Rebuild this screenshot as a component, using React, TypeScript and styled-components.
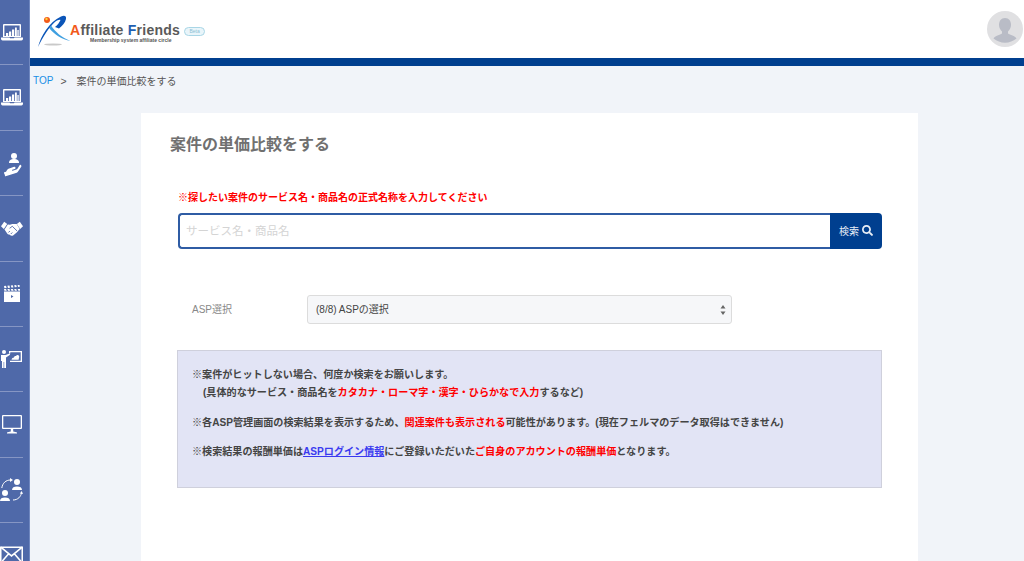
import styled, { createGlobalStyle } from 'styled-components';
import { FaHandHolding, FaSearch } from 'react-icons/fa';

const GlobalStyle = createGlobalStyle`
  html, body {
    margin: 0;
    height: 100%;
    overflow: hidden;
    background: #f1f4f9;
    font-family: "Liberation Sans", "Noto Sans CJK JP", sans-serif;
  }
`;

const Page = styled.div`
  display: flex;
  width: 1024px;
  height: 561px;
  overflow: hidden;
`;

const Sidebar = styled.nav`
  flex: 0 0 30px;
  box-sizing: border-box;
  height: 561px;
  overflow: hidden;
  background: #4f69a9;
  border-right: 1px solid #7088c0;
`;

const SideItem = styled.div`
  box-sizing: border-box;
  width: 23px;
  height: 65.4px;
  display: flex;
  align-items: center;
  justify-content: center;
  color: #fff;
  border-bottom: 1px solid #8696c4;
`;

const HandWrap = styled.div`
  position: relative;
  width: 20px;
  height: 20px;

  > svg:first-child {
    position: absolute;
    left: 0;
    bottom: -2px;
    transform: rotate(-18deg);
  }

  > svg:last-child {
    position: absolute;
    left: 6px;
    top: 0;
  }
`;

const Main = styled.div`
  flex: 1;
  display: flex;
  flex-direction: column;
  min-width: 0;
`;

const Header = styled.header`
  height: 58px;
  flex: 0 0 58px;
  box-sizing: border-box;
  padding: 0 1px 0 8px;
  background: #fff;
  display: flex;
  align-items: center;
  justify-content: space-between;
`;

const Logo = styled.div`
  display: flex;
  align-items: center;
  padding-top: 5px;
`;

const LogoText = styled.div`
  display: flex;
  flex-direction: column;
  margin-left: -1px;
  padding-top: 2px;
`;

const LogoName = styled.div`
  font-size: 14px;
  line-height: 15px;
  font-weight: 700;
  color: #5a5a5a;
  letter-spacing: 0.25px;
  white-space: nowrap;
`;

const LogoLetter = styled.span<{ $color: string }>`
  color: ${p => p.$color};
`;

const LogoTag = styled.div`
  font-size: 5px;
  line-height: 5px;
  font-weight: 700;
  color: #555;
  margin-left: 20px;
  white-space: nowrap;
`;

const BetaPill = styled.div`
  width: 19px;
  height: 7px;
  margin: 0 0 0 4px;
  border: 1px solid #a9d6e6;
  border-radius: 5px;
  background: #e9f5fa;
  color: #8dbfd4;
  font-size: 5px;
  line-height: 7px;
  text-align: center;
`;

const Bar = styled.div`
  flex: 0 0 8px;
  background: #003f8f;
`;

const Breadcrumb = styled.div`
  flex: 0 0 47px;
  box-sizing: border-box;
  padding: 7px 0 0 3px;
  display: flex;
  align-items: flex-start;
  font-size: 10px;
  line-height: 16px;
  color: #555;
`;

const CrumbLink = styled.a`
  color: #1a8fe6;
  font-size: 10px;
  margin-right: 7px;
`;

const CrumbSep = styled.span`
  margin-right: 10px;
  font-size: 10.5px;
`;

const CrumbText = styled.span`
  line-height: 15px;
  padding-top: 1px;
`;

const Card = styled.section`
  flex: 1;
  box-sizing: border-box;
  width: 777px;
  margin-left: 111px;
  padding: 22px 36px 0 29px;
  background: #fff;
`;

const Title = styled.h1`
  margin: 0;
  font-size: 16px;
  line-height: 20px;
  font-weight: 700;
  color: #707070;
`;

const Warning = styled.p`
  margin: 36px 0 0 8px;
  font-size: 10px;
  line-height: 14px;
  font-weight: 700;
  color: #f00;
`;

const SearchRow = styled.div`
  display: flex;
  height: 36px;
  margin: 8px 0 0 8px;
`;

const SearchInput = styled.input`
  flex: 1;
  min-width: 0;
  box-sizing: border-box;
  padding: 0 6px;
  border: 2px solid #2f5ca4;
  border-right: 0;
  border-radius: 4px 0 0 4px;
  outline: none;
  background: #fff;
  font-family: inherit;
  font-size: 11.5px;

  &::placeholder {
    color: #d4d4d4;
  }
`;

const SearchButton = styled.button`
  flex: 0 0 52px;
  padding: 0 0 2px;
  border: 0;
  border-radius: 0 4px 4px 0;
  background: #003f8f;
  color: #e8eef6;
  font-family: inherit;
  font-size: 10px;
  display: flex;
  align-items: center;
  justify-content: center;
  gap: 3px;
`;

const AspRow = styled.div`
  display: flex;
  align-items: center;
  height: 29px;
  margin: 46px 0 0 22px;
`;

const AspLabel = styled.label`
  flex: 0 0 115px;
  padding-bottom: 3px;
  font-size: 10px;
  color: #888;
`;

const SelectBox = styled.div`
  position: relative;
  box-sizing: border-box;
  width: 425px;
  height: 29px;
  padding: 0 8px 3px;
  display: flex;
  align-items: center;
  border: 1px solid #dcdcdc;
  border-radius: 3px;
  background: #f6f7f9;
  font-size: 10px;
  color: #444;
`;

const Arrows = styled.svg`
  position: absolute;
  right: 5px;
  top: 8px;
`;

const Notice = styled.div`
  box-sizing: border-box;
  height: 138px;
  margin: 26px 0 0 7px;
  padding: 15px 14px 0;
  border: 1px solid #cfd0dc;
  background: #e2e4f5;
  font-size: 10.1px;
  line-height: 18px;
  font-weight: 700;
  color: #444;
`;

const NoticePara = styled.p`
  margin: 0 0 11.5px;
`;

const Indent = styled.span`
  display: block;
  padding-left: 11px;
`;

const Red = styled.span`
  color: #f00;
`;

const NoticeLink = styled.a`
  color: #3a3af0;
  text-decoration: underline;
`;

const LaptopIcon = () => (
  <svg width="22" height="17" viewBox="0 0 22 17" fill="currentColor">
    <path d="M3 0h16a1 1 0 0 1 1 1v12H2V1a1 1 0 0 1 1-1zm.4 1.500V12h15.200V1.500z" fillRule="evenodd" />
    <path d="M0 13.600h8.500l.6.700h3.800l.6-.7H22v1.200a1.600 1.600 0 0 1-1.600 1.600H1.600A1.600 1.600 0 0 1 0 14.800z" />
    <path d="M5 9h2.200v3H5zM8 7.500h2.200V12H8zM11 5.500h2.200V12H11zM14 3.500h1.800V12H14zM16.400 6h1.300v6h-1.300z" />
  </svg>
);

const HandPersonIcon = () => (
  <HandWrap>
    <FaHandHolding size={19} />
    <svg width="12" height="10" viewBox="0 0 12 10" fill="currentColor">
      <circle cx="6" cy="3" r="3" />
      <path d="M1 10c0-3 2-4 5-4s5 1 5 4z" />
    </svg>
  </HandWrap>
);

const HandshakeIcon = () => (
  <svg width="22" height="15" viewBox="0 0 22 15" fill="currentColor">
    <path d="M0 5.200 3.200.8l3 2.200-3.400 5z" />
    <path d="M22 5.200 18.800.8l-3 2.200 3.400 5z" />
    <path d="M3.500 8.500 6.800 3.500c1.500.3 3 .1 4.400-.4l4.500-.2 3 5-3 3.500-3.600 3c-1.500.8-2.600.3-3.200-.6-1.500 0-2.700-.8-3.200-2z" />
    <path d="M8.600 7.200c1-.4 1.800-1.200 2.600-2l4.800 4.700M7.400 11.500l1.500-1.500M9.800 13l1.500-1.500" fill="none" stroke="#4f69a9" strokeWidth="0.9" />
  </svg>
);

const ClapperIcon = () => (
  <svg width="16" height="17" viewBox="0 0 16 17" fill="currentColor">
    <path d="M0 1 2 .8 2.600 3 .4 3.300zM3.400.7l2-.2.600 2.200-2 .2zM6.800.4l2-.2.600 2.200-2 .2zM10.200.2l2-.2.600 2.100-2 .2zM13.600 0 15.500 0l.3 1.800-1.800.2z" />
    <path d="M0 4h2l.8 1.800H.4zM3.400 4h2l.8 1.800H4zM6.800 4h2l.8 1.800H7.400zM10.200 4h2l.8 1.800h-2.200zM13.600 4H16v1.800h-1.600z" />
    <path d="M0 6.500h16V17H0zm7 3.500v3l2.500-1.500z" fillRule="evenodd" />
  </svg>
);

const PresenterIcon = () => (
  <svg width="21" height="18" viewBox="0 0 21 18" fill="currentColor">
    <circle cx="3" cy="2" r="2" />
    <path d="M0 5h4.600l4-1.500.5 1.200L5 7.400V18H3.200v-6h-.6v6H1V11H0z" />
    <path d="M8 1h13v11H9V10.700h10.700V2.300H9.300V3.500H8z" />
    <path d="M10.500 9.800c.4-1.600 1.400-2.400 2.500-2.400.2-1.200 1.200-1.800 2-1.300.5-1 1.800-1.300 2.600-.6.800.6.800 1.800.2 2.500.3 1 0 1.800-1 1.800z" />
  </svg>
);

const MonitorIcon = () => (
  <svg width="20" height="19" viewBox="0 0 20 19" fill="currentColor">
    <path d="M1 0h18a1 1 0 0 1 1 1v12a1 1 0 0 1-1 1H1a1 1 0 0 1-1-1V1a1 1 0 0 1 1-1zm.3 1.300v11.400h17.400V1.300z" fillRule="evenodd" />
    <path d="M8.800 14h2.400v2.400c1.500.3 3 .5 3.800 1.200v.8H5v-.8c.8-.7 2.300-.9 3.800-1.200z" />
  </svg>
);

const CycleIcon = () => (
  <svg width="23" height="23" viewBox="0 0 23 23" fill="currentColor">
    <circle cx="17" cy="4" r="3" />
    <path d="M12 12c0-2.500 2-3.500 5-3.500s5 1 5 3.500z" />
    <circle cx="5" cy="15" r="3" />
    <path d="M0 23c0-2.500 2-3.500 5-3.500s5 1 5 3.500z" />
    <path d="M1.800 10C2.500 5 6 2 10.500 2" fill="none" stroke="currentColor" strokeWidth="1" />
    <path d="M10 0l3 2-3 2z" />
    <path d="M21.500 15c-.7 3.500-3.500 7-8.500 7" fill="none" stroke="currentColor" strokeWidth="1" />
    <path d="M19.800 15.500l1.900-2.500 1.300 3z" />
  </svg>
);

const MailIcon = () => (
  <svg width="24" height="18" viewBox="0 0 24 18" fill="none" stroke="currentColor" strokeWidth="1.6">
    <path d="M.8.800h22.400v16.400H.800z" />
    <path d="M.8.800 12 10 23.200.800M.8 17.200l8-9.200M23.200 17.200l-8-9.200" />
  </svg>
);

const LogoMark = () => (
  <svg width="33" height="33" viewBox="0 0 33 33">
    <ellipse cx="15" cy="29.500" rx="9" ry="0.9" fill="#c9c9c9" />
    <path d="M0 32C3 21 11 7 23 1.500c3.500-1.500 5.500-.5 5 2.500-.7 3.800-4 7-7 9.500l-4-1.500c2.500-2 4.500-4.500 5.500-7-1-.8-3 0-5 1.500C11 12 5 22 0 32z" fill="#0b55b8" />
    <path d="M13 10.500c4.500 6.500 10.500 12 19.500 15.500-8.500-1.500-16-6.500-21-12.500z" fill="#3f9fe0" />
    <circle cx="9" cy="5" r="3" fill="#f2591a" />
    <circle cx="8.500" cy="4" r="1.200" fill="#ffd23a" />
  </svg>
);

const AvatarIcon = () => (
  <svg width="36" height="36" viewBox="0 0 36 36">
    <circle cx="18" cy="18" r="18" fill="#e0e0e2" />
    <path d="M18 7c4 0 6 3 6 7 0 3-1.500 5-3 6.500v2c2 1.500 7 2 8.500 5A18 18 0 0 1 6.500 27.500c1.500-3 6.500-3.500 8.500-5v-2C13.500 19 12 17 12 14c0-4 2-7 6-7z" fill="#b9bcc6" />
  </svg>
);

const sideIcons = [
  <LaptopIcon key="a" />,
  <LaptopIcon key="b" />,
  <HandPersonIcon key="c" />,
  <HandshakeIcon key="d" />,
  <ClapperIcon key="e" />,
  <PresenterIcon key="f" />,
  <MonitorIcon key="g" />,
  <CycleIcon key="h" />,
  <MailIcon key="i" />,
];

export default function App() {
  return (
    <>
      <GlobalStyle />
      <Page>
        <Sidebar>
          {sideIcons.map((icon, index) => (
            <SideItem key={index}>{icon}</SideItem>
          ))}
        </Sidebar>
        <Main>
          <Header>
            <Logo>
              <LogoMark />
              <LogoText>
                <LogoName>
                  <LogoLetter $color="#f2591a">A</LogoLetter>ffiliate <LogoLetter $color="#1f5fb0">F</LogoLetter>riends
                </LogoName>
                <LogoTag>Membership system affiliate circle</LogoTag>
              </LogoText>
              <BetaPill>Beta</BetaPill>
            </Logo>
            <AvatarIcon />
          </Header>
          <Bar />
          <Breadcrumb>
            <CrumbLink>TOP</CrumbLink>
            <CrumbSep>&gt;</CrumbSep>
            <CrumbText>案件の単価比較をする</CrumbText>
          </Breadcrumb>
          <Card>
            <Title>案件の単価比較をする</Title>
            <Warning>※探したい案件のサービス名・商品名の正式名称を入力してください</Warning>
            <SearchRow>
              <SearchInput placeholder="サービス名・商品名" />
              <SearchButton>
                検索 <FaSearch size={11} />
              </SearchButton>
            </SearchRow>
            <AspRow>
              <AspLabel>ASP選択</AspLabel>
              <SelectBox>
                (8/8) ASPの選択
                <Arrows width="6" height="12" viewBox="0 0 6 12" fill="#666">
                  <path d="M3 1l2.500 3.500h-5zM3 11 .5 7.500h5z" />
                </Arrows>
              </SelectBox>
            </AspRow>
            <Notice>
              <NoticePara>
                ※案件がヒットしない場合、何度か検索をお願いします。
                <Indent>
                  (具体的なサービス・商品名を<Red>カタカナ・ローマ字・漢字・ひらかなで入力</Red>するなど)
                </Indent>
              </NoticePara>
              <NoticePara>
                ※各ASP管理画面の検索結果を表示するため、<Red>関連案件も表示される</Red>可能性があります。(現在フェルマのデータ取得はできません)
              </NoticePara>
              <NoticePara>
                ※検索結果の報酬単価は<NoticeLink>ASPログイン情報</NoticeLink>にご登録いただいた<Red>ご自身のアカウントの報酬単価</Red>となります。
              </NoticePara>
            </Notice>
          </Card>
        </Main>
      </Page>
    </>
  );
}
